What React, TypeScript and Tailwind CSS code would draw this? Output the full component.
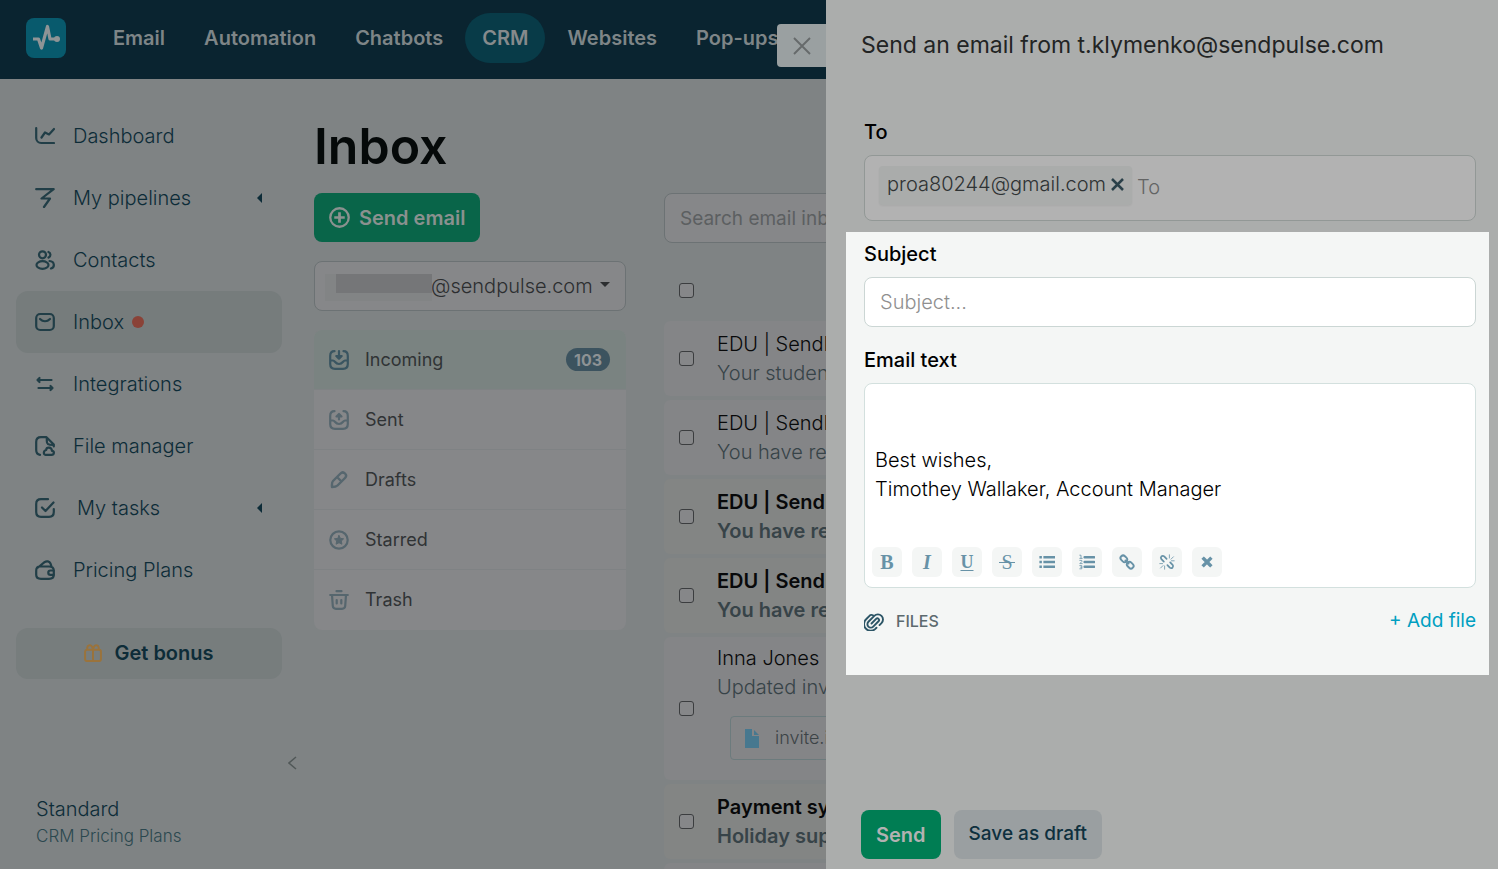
import type { ComponentType, ReactNode } from 'react'

type IconProps = { className?: string }

function Icon({ className, children, width = 2.2 }: { className?: string; children: ReactNode; width?: number }) {
  return (
    <svg
      viewBox="0 0 20 20"
      fill="none"
      stroke="currentColor"
      strokeWidth={width}
      strokeLinecap="round"
      strokeLinejoin="round"
      className={className}
      aria-hidden="true"
    >
      {children}
    </svg>
  )
}

const ChartIcon = (p: IconProps) => (
  <Icon {...p}>
    <path d="M1.200 2v10a5 5 0 0 0 5 5H19M6.500 11.500l3.500-5 4 2L19 3" />
  </Icon>
)

const PipelineIcon = (p: IconProps) => (
  <Icon {...p}>
    <path d="M1.200 1.200h17.500L6.500 10.500H15L9 19" />
  </Icon>
)

const ContactsIcon = (p: IconProps) => (
  <Icon {...p}>
    <circle cx="7.500" cy="4.800" r="3.500" />
    <ellipse cx="7.500" cy="15" rx="6" ry="3.800" />
    <path d="M13.500 2a3 3 0 0 1 0 5.600M14.500 11c5.500.5 5.500 6.500 1.500 7.500" />
  </Icon>
)

const MailIcon = (p: IconProps) => (
  <Icon {...p}>
    <rect x="1.200" y="2" width="17.600" height="16" rx="4" />
    <path d="M5 7c3 3 7 3 10 0" />
  </Icon>
)

const SwapIcon = (p: IconProps) => (
  <Icon {...p}>
    <path d="M16.500 6H3M4.500 4 2.500 6l2 2M3.500 14H17M15.500 12l2 2-2 2" />
  </Icon>
)

const FileIcon = (p: IconProps) => (
  <Icon {...p}>
    <path d="M5 18.800C2.500 18.500 1.200 17 1.200 14V6c0-3.500 1.500-4.800 4.800-4.800h5.500l7.300 7.300v2M11.800 1.500V5c0 3 1 4 6.500 4" />
    <path d="M10.500 18.800h6c3 0 3.200-3.800.5-4-.5-4-5.500-4-5.800-.8-3 .5-3 4.800-.7 4.800z" />
  </Icon>
)

const TaskIcon = (p: IconProps) => (
  <Icon {...p}>
    <path d="M13 1.200H6C2.500 1.200 1.200 2.500 1.200 6v8c0 3.500 1.300 4.800 4.800 4.800h8c3.500 0 4.800-1.300 4.800-4.800v-3M7 9.500l3.500 3.500L18.500 4.500" />
  </Icon>
)

const WalletIcon = (p: IconProps) => (
  <Icon {...p}>
    <path d="M3 7.500 9.500 2.200c2-1.500 5-1 6 1.300l1 3M5 6.500h9c3.500 0 4.800 1.200 4.800 4.200v4c0 3-1.300 4.100-4.800 4.100H6c-3.500 0-4.800-1.100-4.800-4.100v-4c0-3 1.300-4.200 3.800-4.200z" />
    <path d="M18.500 10.500h-3a2.200 2.200 0 0 0 0 4.400h3" />
  </Icon>
)

const GiftIcon = (p: IconProps) => (
  <Icon {...p}>
    <path d="M10 6v13M3.200 6.500h13.600a2 2 0 0 1 2 2V17a2 2 0 0 1-2 2H3.200a2 2 0 0 1-2-2V8.500a2 2 0 0 1 2-2zM10 6C8.500-.5 3.500 0 3.500 6M10 6c1.500-6.500 6.500-6 6.500 0" />
  </Icon>
)

const IncomingIcon = (p: IconProps) => (
  <Icon {...p}>
    <path d="M5.500 1.200C2.500 1.200 1.200 2.500 1.200 6v8c0 3.500 1.300 4.800 4.800 4.800h8c3.500 0 4.800-1.300 4.800-4.800V6c0-3.500-1.300-4.800-4.300-4.800M1.200 10.500H4c2 0 2 3.500 6 3.500s4-3.500 6-3.500h2.800" />
    <path d="M10 1.200v7M7.300 6 10 8.700 12.700 6z" />
  </Icon>
)

const SentIcon = (p: IconProps) => (
  <Icon {...p}>
    <path d="M5.500 1.200C2.500 1.200 1.200 2.500 1.200 6v8c0 3.500 1.300 4.800 4.800 4.800h8c3.500 0 4.800-1.300 4.800-4.800V6c0-3.500-1.300-4.800-4.300-4.800M1.200 10.500H4c2 0 2 3.500 6 3.500s4-3.500 6-3.500h2.800" />
    <path d="M10 9.500V6M7.500 6.500 10 4l2.500 2.500z" />
  </Icon>
)

const PencilIcon = (p: IconProps) => (
  <Icon {...p} width={2.400}>
    <path d="m4 11 7.500-7.500c1.500-1.500 3-1.500 4.500 0s1.500 3 0 4.500L8.500 15.500C7 17 5.500 17 3 17c0-2-.5-4.500 1-6zM8.500 7.500l3.500 3.500" />
  </Icon>
)

const StarIcon = (p: IconProps) => (
  <Icon {...p}>
    <circle cx="10" cy="10" r="8.700" />
    <path
      d="m10 5.500 1.400 2.900 3.200.4-2.300 2.200.6 3.200-2.900-1.500-2.900 1.500.6-3.200-2.300-2.200 3.200-.4z"
      fill="currentColor"
      strokeWidth="1"
    />
  </Icon>
)

const TrashIcon = (p: IconProps) => (
  <Icon {...p}>
    <path d="M7.500 1.200h5M1.200 5h17.600M3 5l.8 11c.2 2 1 2.800 3.200 2.800h6c2.200 0 3-.8 3.200-2.800L17 5M7.700 10v3.500M12.300 10v3.500" />
  </Icon>
)

const PaperclipIcon = (p: IconProps) => (
  <Icon {...p} width={1.900}>
    <path
      d="M6.500 10H13a1.700 1.700 0 0 1 0 3.400H5.500a3.400 3.400 0 0 1 0-6.800h8.300a5.100 5.100 0 0 1 0 10.200H11M13.500 6.600a3.400 3.400 0 0 0-2-3.400H6A6.200 6.200 0 0 0 5 16.500h2"
      transform="rotate(-45 10 10)"
    />
  </Icon>
)

// Text style buttons use serif letters
const BoldGlyph = () => <span className="font-[Liberation_Serif,serif] text-xl leading-5 font-bold">B</span>
const ItalicGlyph = () => <span className="font-[Liberation_Serif,serif] text-xl leading-5 font-bold italic">I</span>
const UnderlineGlyph = () => (
  <span className="font-[Liberation_Serif,serif] text-lg leading-5 font-bold underline decoration-1 underline-offset-2">
    U
  </span>
)
const StrikeGlyph = () => (
  <span className="relative font-[Liberation_Serif,serif] text-xl leading-5">
    S<span className="absolute inset-x-[-2px] top-[10px] h-px bg-current" />
  </span>
)

const ListIcon = (p: IconProps) => (
  <Icon {...p} width={3}>
    <path d="M7 4h12M7 10h12M7 16h12M2 4h.1M2 10h.1M2 16h.1" strokeLinecap="square" />
  </Icon>
)

const NumberedIcon = (p: IconProps) => (
  <Icon {...p}>
    <path d="M7 4h12M7 10h12M7 16h12" strokeWidth="3" />
    <path d="M1 1.500h1.500V5M1 5.500h3M1 8h2.500v1.500L1 12h3M1 14.500h2.500v4H1M2 16.500h1.500" strokeWidth="1" />
  </Icon>
)

const LinkIcon = (p: IconProps) => (
  <Icon {...p} width={2.400}>
    <rect x="1.500" y="2.700" width="9" height="6.500" rx="3.200" transform="rotate(45 6 6)" />
    <rect x="9.500" y="10.700" width="9" height="6.500" rx="3.200" transform="rotate(45 14 14)" />
    <path d="m8 8 4 4" />
  </Icon>
)

const UnlinkIcon = (p: IconProps) => (
  <Icon {...p}>
    <path d="M6 9.500 3 6.500C1 4 4 1 6.500 3L9.500 6M14 10.500l3 3c2 2.500-1 5.500-3.500 3.500l-3-3" />
    <path d="M13 1v4M15 6.500l3-3M15.500 8.500h3.500M7 15v4M1 12h3.500M2 17.500l3-3" strokeWidth="1" />
  </Icon>
)

const ClearIcon = (p: IconProps) => (
  <Icon {...p}>
    <path d="m6 6 8 8M14 6l-8 8" strokeWidth="4.200" strokeLinecap="square" />
  </Icon>
)

const products = ['Email', 'Automation', 'Chatbots', 'CRM', 'Websites', 'Pop-ups']

type MenuItem = { label: string; icon: ComponentType<IconProps>; sub?: boolean; active?: boolean }

const menu: MenuItem[] = [
  { label: 'Dashboard', icon: ChartIcon },
  { label: 'My pipelines', icon: PipelineIcon, sub: true },
  { label: 'Contacts', icon: ContactsIcon },
  { label: 'Inbox', icon: MailIcon, active: true },
  { label: 'Integrations', icon: SwapIcon },
  { label: 'File manager', icon: FileIcon },
  { label: 'My tasks', icon: TaskIcon, sub: true },
  { label: 'Pricing Plans', icon: WalletIcon },
]

const folders = [
  { label: 'Incoming', icon: IncomingIcon, count: 103 },
  { label: 'Sent', icon: SentIcon },
  { label: 'Drafts', icon: PencilIcon },
  { label: 'Starred', icon: StarIcon },
  { label: 'Trash', icon: TrashIcon },
]

const messages = [
  { from: 'EDU | SendPulse', text: 'Your student' },
  { from: 'EDU | SendPulse', text: 'You have received' },
  { from: 'EDU | SendPulse', text: 'You have received', unread: true },
  { from: 'EDU | SendPulse', text: 'You have received', unread: true },
  { from: 'Inna Jones', text: 'Updated invitation', file: 'invite.ics' },
  { from: 'Payment system', text: 'Holiday support', unread: true },
  { from: '', text: '' },
]

const tools: { label: string; icon: ComponentType<IconProps> }[] = [
  { label: 'Bold', icon: BoldGlyph },
  { label: 'Italic', icon: ItalicGlyph },
  { label: 'Underline', icon: UnderlineGlyph },
  { label: 'Strikethrough', icon: StrikeGlyph },
  { label: 'Bulleted list', icon: ListIcon },
  { label: 'Numbered list', icon: NumberedIcon },
  { label: 'Insert link', icon: LinkIcon },
  { label: 'Remove link', icon: UnlinkIcon },
  { label: 'Clear formatting', icon: ClearIcon },
]

function TopBar() {
  return (
    <header className="flex h-[79px] items-center bg-[#0a2430] pb-[3px] pl-[26px]">
      <a href="#" aria-label="Home" className="mr-[30px] flex h-10 w-10 items-center justify-center rounded-lg bg-[#085a6d]">
        <svg viewBox="0 0 40 40" className="h-10 w-10" fill="none" stroke="#8f9496" strokeWidth="3.200" aria-hidden="true">
          <path d="M7 21h5.500l3 9 6-21.500L24 21h7" strokeLinejoin="round" />
          <circle cx="31" cy="21" r="3" fill="#8f9496" stroke="none" />
        </svg>
      </a>
      <nav className="flex items-center gap-[5px]">
        {products.map((name) => (
          <a
            key={name}
            href="#"
            className={
              name === 'CRM'
                ? 'flex h-[50px] items-center rounded-full bg-[#083b48] px-[17px] text-xl font-semibold text-[#868a8c]'
                : 'flex h-[50px] items-center px-[17px] text-xl font-semibold text-[#7e8587]'
            }
          >
            {name}
          </a>
        ))}
      </nav>
    </header>
  )
}

function Sidebar() {
  return (
    <aside className="flex w-[314px] shrink-0 flex-col pt-[26px] text-[#0d2c38]">
      <nav className="mr-8 ml-4">
        {menu.map(({ label, icon: ItemIcon, sub, active }) => (
          <a
            key={label}
            href="#"
            className={
              active
                ? 'flex h-[62px] items-center rounded-xl bg-[#767c7c] pr-5 pl-[19px]'
                : 'flex h-[62px] items-center rounded-xl pr-5 pl-[19px]'
            }
          >
            <ItemIcon className="h-5 w-5 text-[#213e47]" />
            <span className={label === 'My tasks' ? 'ml-[22px] text-xl font-light' : 'ml-[18px] text-xl font-light'}>
              {label}
            </span>
            {active && <span className="ml-2 h-3 w-3 rounded-full bg-[#8a4237]" />}
            {sub && (
              <svg viewBox="0 0 5 10" className="ml-auto h-[10px] w-[5px]" fill="currentColor" aria-hidden="true">
                <path d="M5 0v10L0 5z" />
              </svg>
            )}
          </a>
        ))}
      </nav>
      <button
        type="button"
        className="mt-[27px] mr-8 ml-4 flex h-[51px] items-center justify-center gap-3 rounded-xl bg-[#777d7d] pb-[2px] text-xl font-semibold"
      >
        <GiftIcon className="h-[18px] w-[18px] text-[#9a733c]" />
        Get bonus
      </button>
      <button type="button" aria-label="Collapse menu" className="mt-[77px] mr-[17px] self-end text-[#515858]">
        <svg viewBox="0 0 9 14" className="h-[14px] w-[9px]" fill="none" stroke="currentColor" strokeWidth="1.500">
          <path d="M8 1 1 7l7 6" />
        </svg>
      </button>
      <div className="mt-auto mb-[19px] pl-9">
        <p className="text-xl leading-[27px] font-light">Standard</p>
        <a href="#" className="block text-[17px] leading-[27px] font-light text-[#2b484f]">
          CRM Pricing Plans
        </a>
      </div>
    </aside>
  )
}

function Folders() {
  return (
    <div className="mt-[19px] overflow-hidden rounded-lg bg-[#868789]">
      {folders.map(({ label, icon: ItemIcon, count }) => (
        <a
          key={label}
          href="#"
          className={
            count
              ? 'flex h-[60px] items-center border-b border-[#7f8284] bg-[#7a8381] pr-4 pl-[15px] text-[#3a5561]'
              : 'flex h-[60px] items-center border-b border-[#7f8284] pr-4 pl-[15px] text-[#56666e] last:border-b-0'
          }
        >
          <ItemIcon className="h-5 w-5" />
          <span className="ml-4 text-lg text-[#303335]">{label}</span>
          {count && (
            <span className="ml-auto flex h-[23px] items-center rounded-full bg-[#3c535f] px-2 text-base font-bold text-[#8d9294]">
              {count}
            </span>
          )}
        </a>
      ))}
    </div>
  )
}

function Messages() {
  return (
    <section className="ml-[38px] min-w-0 flex-1 pt-[114px]">
      <input
        type="search"
        aria-label="Search email inbox"
        placeholder="Search email inbox"
        className="block h-[50px] w-full rounded-lg border border-[#6c7274] bg-[#868789] px-[15px] text-[19px] placeholder:text-[#5c5f61]"
      />
      <div className="flex h-[78px] items-center pt-4 pl-[15px]">
        <Tick label="Select all" />
      </div>
      <ul className="flex flex-col gap-1">
        {messages.map((m, i) => (
          <li
            key={i}
            className={
              m.unread
                ? 'flex min-h-[75px] items-center rounded-md bg-[#838584] pl-[15px] font-semibold'
                : 'flex min-h-[75px] items-center rounded-md bg-[#848587] pl-[15px] font-light'
            }
          >
            <Tick label={`Select message from ${m.from}`} />
            <div className="ml-[23px] py-[7px] text-xl leading-[29px] whitespace-nowrap">
              <p className="text-[#08090a]">{m.from}</p>
              <p className="text-[#374348]">{m.text}</p>
              {m.file && (
                <a
                  href="#"
                  className="mt-[14px] mb-[13px] ml-[13px] flex h-11 w-[200px] items-center gap-4 rounded border border-[#6c7b7d] px-[14px] text-lg text-[#3c4346]"
                >
                  <svg viewBox="0 0 14 19" className="h-[19px] w-[14px]" fill="#47788f" aria-hidden="true">
                    <path d="M0 0h7v7h7v12H0zM9 1l5 5H9z" />
                  </svg>
                  {m.file}
                </a>
              )}
            </div>
          </li>
        ))}
      </ul>
    </section>
  )
}

function Tick({ label }: { label: string }) {
  return (
    <input
      type="checkbox"
      aria-label={label}
      className="h-[15px] w-[15px] shrink-0 appearance-none rounded-[3px] border border-[#3b3d3f] bg-[#868789]"
    />
  )
}

function Compose() {
  return (
    <aside className="fixed inset-y-0 right-0 flex w-[672px] flex-col bg-[#abadac]">
      <button
        type="button"
        aria-label="Close"
        className="absolute top-6 right-full flex h-[43px] w-[49px] items-center justify-center rounded-l bg-[#9aa0a1] text-[#666a6b]"
      >
        <svg viewBox="0 0 18 18" className="h-[18px] w-[18px]" fill="none" stroke="currentColor" strokeWidth="1.900">
          <path d="m1 1 16 16M17 1 1 17" />
        </svg>
      </button>
      <h2 className="mt-[30px] ml-[35px] text-[23px] leading-[30px] text-[#222424]">
        Send an email from t.klymenko@sendpulse.com
      </h2>
      <div className="mt-[57px] mr-[22px] ml-[38px]">
        <label htmlFor="to" className="block text-xl leading-[30px] font-medium text-black">
          To
        </label>
        <div className="mt-2 flex h-[66px] items-start gap-[5px] rounded-lg border border-[#929896] bg-[#b2b2b2] pt-[10px] pl-[14px]">
          <span className="flex h-[39px] items-center gap-[5px] rounded-sm bg-[#aaacab] px-2 pb-[3px] text-xl font-light text-[#2f3334] shadow-xs">
            proa80244@gmail.com
            <button type="button" aria-label="Remove proa80244@gmail.com" className="text-[#2a4049]">
              <svg viewBox="0 0 13 13" className="h-[13px] w-[13px]" fill="none" stroke="currentColor" strokeWidth="2.500">
                <path d="m1 1 11 11M12 1 1 12" />
              </svg>
            </button>
          </span>
          <input
            id="to"
            placeholder="To"
            className="h-[42px] min-w-0 flex-1 bg-transparent text-xl font-light outline-none placeholder:text-[#636464]"
          />
        </div>
      </div>

      {/* Message fields */}
      <section className="mt-[11px] mr-[9px] ml-5 bg-[#f4f6f5] pt-[7px] pr-[13px] pb-[39px] pl-[18px]">
        <label htmlFor="subject" className="block text-xl leading-[30px] font-medium text-black">
          Subject
        </label>
        <input
          id="subject"
          placeholder="Subject..."
          className="mt-2 block h-[50px] w-full rounded-lg border border-[#cbd6d4] bg-white px-[15px] text-xl font-light placeholder:text-[#8f8f8f]"
        />
        <label htmlFor="body" className="mt-[18px] block text-xl leading-[30px] font-medium text-black">
          Email text
        </label>
        <div className="mt-2 rounded-lg border border-[#d3e0de] bg-white">
          <textarea
            id="body"
            defaultValue={'\n\nBest wishes,\nTimothey Wallaker, Account Manager'}
            className="block h-[163px] w-full resize-none bg-transparent px-[10px] pt-1 text-xl leading-[29px] font-light text-black outline-none"
          />
          <div className="flex gap-[10px] px-[7px] pb-[10px]">
            {tools.map(({ label, icon: ToolIcon }) => (
              <button
                key={label}
                type="button"
                aria-label={label}
                className="flex h-[30px] w-[30px] items-center justify-center rounded-md bg-[#f4f6f5] text-[#6792a7]"
              >
                <ToolIcon className="h-4 w-4" />
              </button>
            ))}
          </div>
        </div>
        <div className="mt-[18px] flex h-[30px] items-center">
          <PaperclipIcon className="h-5 w-5 text-[#2c5566]" />
          <span className="ml-3 text-base font-medium text-[#5c6a6e]">FILES</span>
          <button type="button" className="ml-auto text-[19px] text-[#009fc1]">
            + Add file
          </button>
        </div>
      </section>

      <div className="mt-auto mb-[10px] ml-[35px] flex gap-[13px]">
        <button type="submit" className="h-[49px] rounded-lg bg-[#007d53] px-[15px] text-xl font-semibold text-[#b2b2b2]">
          Send
        </button>
        <button type="button" className="h-[49px] rounded-lg bg-[#9a9fa1] px-[15px] text-[19px] font-medium text-[#0e303e]">
          Save as draft
        </button>
      </div>
    </aside>
  )
}

export default function App() {
  return (
    <div className="flex h-screen flex-col overflow-hidden bg-[#7f8384] font-[Inter,sans-serif]">
      <TopBar />
      <main className="flex min-h-0 flex-1">
        <Sidebar />
        <section className="w-[312px] shrink-0 pt-[37px]">
          <h1 className="h-[60px] text-[50px] leading-[60px] font-semibold text-[#050909]">Inbox</h1>
          <button
            type="button"
            className="mt-[17px] flex h-[49px] items-center gap-[9px] rounded-lg bg-[#096549] px-[15px] text-xl font-semibold text-[#8a918f]"
          >
            <svg viewBox="0 0 20 20" className="h-[21px] w-[21px]" fill="none" stroke="currentColor" strokeWidth="2.200">
              <circle cx="10" cy="10" r="8.800" />
              <path d="M10 5v10M5 10h10" strokeWidth="2.600" />
            </svg>
            Send email
          </button>
          <div className="relative mt-[19px]">
            <select
              aria-label="Mailbox"
              className="block h-[50px] w-full appearance-none rounded-lg border border-[#6c7274] bg-[#868789] pl-[116px] text-xl font-light text-[#2c2e30]"
            >
              <option>@sendpulse.com</option>
            </select>
            <span className="absolute top-[13px] left-[11px] h-[27px] w-[107px] bg-[#828485]" />
            <span className="absolute top-[13px] left-[22px] h-[19px] w-24 bg-[#757678]" />
            <svg viewBox="0 0 10 5" className="absolute top-[21px] right-4 h-[5px] w-[10px]" fill="#2c2e30">
              <path d="M0 0h10L5 5z" />
            </svg>
          </div>
          <Folders />
        </section>
        <Messages />
      </main>
      <Compose />
    </div>
  )
}
